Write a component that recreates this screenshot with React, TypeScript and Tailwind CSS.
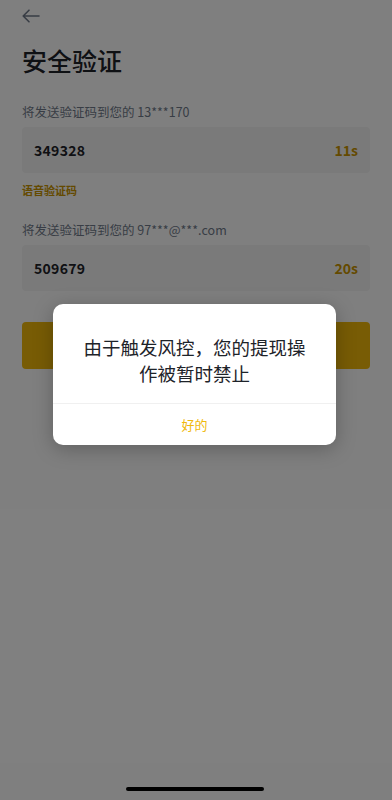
import React from 'react';

const FONT = { fontFamily: '"Noto Sans CJK SC", "Noto Sans", sans-serif' };

const CodeField: React.FC<{ label: string; code: string; timer: string }> = ({ label, code, timer }) => (
  <div className="flex flex-col">
    <div className="text-[12.5px] text-[#707a8a] leading-[18px]">{label}</div>
    <div className="mt-[6px] h-[46px] bg-[#f5f5f5] rounded-[4px] flex items-center justify-between px-[12px]">
      <span className="text-[14px] font-semibold text-[#1e2329] tracking-[0.3px]">{code}</span>
      <span className="text-[14px] font-semibold text-[#c99400]">{timer}</span>
    </div>
  </div>
);

export default function App() {
  return (
    <div className="relative w-[392px] h-[800px] bg-white overflow-hidden" style={FONT}>
      {/* page */}
      <div className="flex flex-col px-[22px]">
        <div className="h-[32px] flex items-center">
          <svg width="18" height="14" viewBox="0 0 18 14" fill="none" stroke="#707a8a" strokeWidth="1.6" strokeLinecap="round" strokeLinejoin="round">
            <path d="M17 7H1.5M7 1.2L1.2 7 7 12.8" />
          </svg>
        </div>
        <h1 className="mt-[10px] text-[25px] font-medium text-[#1e2329] leading-[36px]">安全验证</h1>
        <div className="mt-[25px]">
          <CodeField label="将发送验证码到您的 13***170" code="349328" timer="11s" />
        </div>
        <div className="mt-[9px] text-[11px] font-semibold text-[#c99400] leading-[16px]">语音验证码</div>
        <div className="mt-[23px]">
          <CodeField label="将发送验证码到您的 97***@***.com" code="509679" timer="20s" />
        </div>
        {/* submit button, label hidden behind the dialog */}
        <button className="mt-[31px] h-[47px] rounded-[4px] bg-[#f0b90b]" />
      </div>

      {/* overlay */}
      <div className="absolute inset-0 bg-black/50 flex justify-start items-start pt-[304px] pl-[53px]">
        <div className="w-[283px] bg-white rounded-[10px] shadow-[0_4px_20px_rgba(0,0,0,0.25)] flex flex-col">
          <div className="px-[28px] pt-[30px] pb-[17px] text-center text-[18.5px] leading-[26px] text-[#1e2329]">
            由于触发风控，您的提现操作被暂时禁止
          </div>
          <div className="h-px bg-[#f0f0f0]" />
          <div className="h-[41px] flex items-center justify-center text-[13px] text-[#f0b90b]">好的</div>
        </div>
      </div>

      {/* home indicator */}
      <div className="absolute left-[126px] bottom-[9px] w-[138px] h-[4px] rounded-full bg-black" />
    </div>
  );
}
